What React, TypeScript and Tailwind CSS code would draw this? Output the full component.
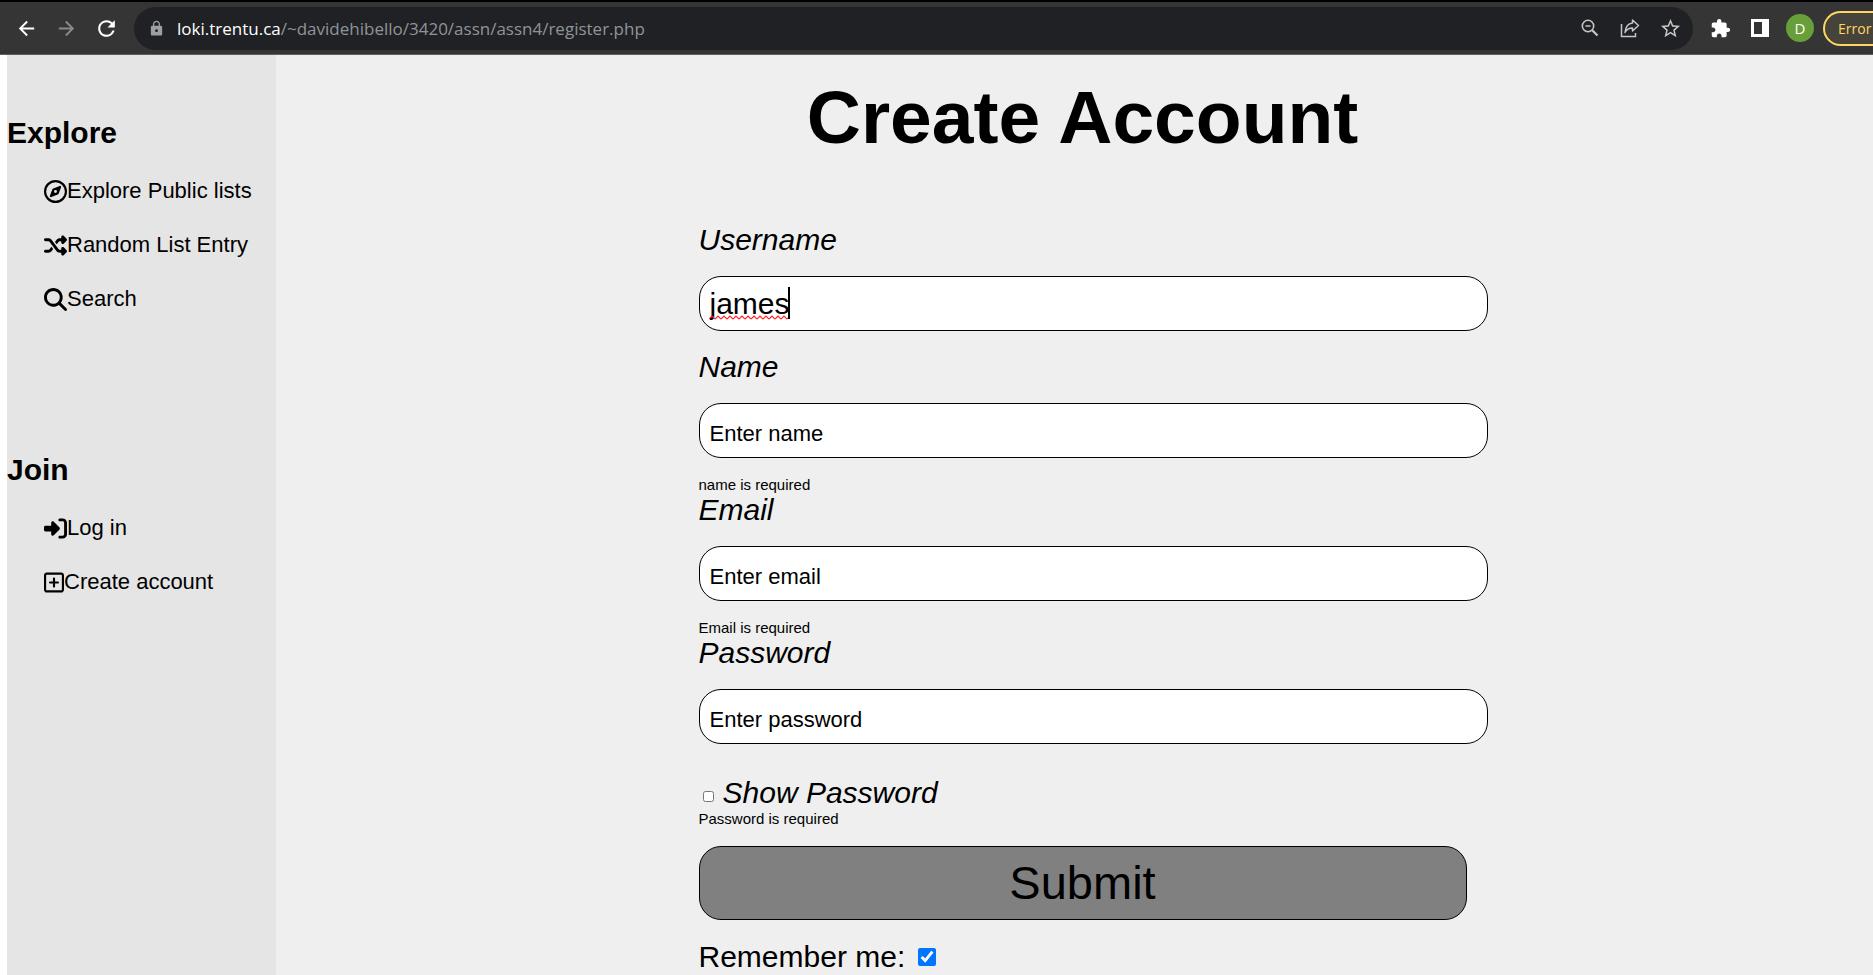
import type { ReactNode } from "react";
import { FaRegCompass, FaShuffle, FaMagnifyingGlass, FaRegSquarePlus, FaRightToBracket } from "react-icons/fa6";
import { MdArrowBack, MdArrowForward, MdRefresh, MdLock, MdStarBorder, MdExtension } from "react-icons/md";

function ZoomOutIcon() {
  return (
    <svg viewBox="0 0 18 18" className="h-[18px] w-[18px]" fill="none" stroke="currentColor" aria-hidden="true">
      <circle cx="7" cy="7" r="5.7" strokeWidth="1.6" />
      <path d="M4.500 7h5" strokeWidth="1.5" />
      <path d="M11.200 11.200l5.300 5.300" strokeWidth="2.2" />
    </svg>
  );
}

function ShareIcon() {
  return (
    <svg viewBox="0 0 20 20" className="h-5 w-5" fill="none" stroke="currentColor" strokeWidth="1.5" aria-hidden="true">
      <path d="M1.500 6v12.500h14V15" />
      <path d="M12.500 2l6 5.500-6 5.500V10C9 10 6.500 11.500 5 14.500 5.500 9 8 5.500 12.500 5z" strokeLinejoin="round" />
    </svg>
  );
}

function SidePanelIcon() {
  return (
    <svg viewBox="0 0 18 18" className="h-[18px] w-[18px]" aria-hidden="true">
      <path fill="currentColor" fillRule="evenodd" d="M0 0h18v18H0zM3 3v12h8V3z" />
    </svg>
  );
}

function ToolButton({ label, className = "", children }: { label: string; className?: string; children: ReactNode }) {
  return (
    <button type="button" aria-label={label} className={`flex h-8 w-10 shrink-0 items-center justify-center ${className}`}>
      {children}
    </button>
  );
}

function BrowserBar() {
  return (
    <header className="flex h-[55px] shrink-0 items-center overflow-hidden border-t-2 border-b border-t-black border-b-[#5f5f5f] bg-[#353535] pl-[6px] text-white">
      <ToolButton label="Back"><MdArrowBack size={23} /></ToolButton>
      <ToolButton label="Forward" className="text-[#8a8a8a]"><MdArrowForward size={23} /></ToolButton>
      <ToolButton label="Reload"><MdRefresh size={25} /></ToolButton>
      <div className="ml-2 flex h-[43px] min-w-0 grow items-center rounded-full bg-[#202124] pr-[3px] pl-[14px] font-['Open_Sans','Noto_Sans',sans-serif] text-[17px] text-[#8f9499]">
        <MdLock size={17} className="mr-3 shrink-0 text-[#9aa0a6]" />
        <p className="grow truncate pt-px">
          <span className="text-white">loki.trentu.ca</span>/~davidehibello/3420/assn/assn4/register.php
        </p>
        <ToolButton label="Zoom" className="text-[#c4c7c5]"><ZoomOutIcon /></ToolButton>
        <ToolButton label="Share" className="text-[#c4c7c5]"><ShareIcon /></ToolButton>
        <ToolButton label="Bookmark" className="text-[#c4c7c5]"><MdStarBorder size={23} /></ToolButton>
      </div>
      <ToolButton label="Extensions" className="ml-[7px]"><MdExtension size={21} /></ToolButton>
      <ToolButton label="Side panel"><SidePanelIcon /></ToolButton>
      <ToolButton label="Profile">
        <span className="flex h-7 w-7 items-center justify-center rounded-full bg-[#689f38] font-['Open_Sans',sans-serif] text-[15px]">D</span>
      </ToolButton>
      <button type="button" className="ml-[3px] h-[35px] w-[50px] shrink-0 rounded-l-full border-2 border-r-0 border-[#fdd663] bg-[#46433a] pl-[13px] text-left font-['Open_Sans',sans-serif] text-[14px] text-[#fdd663]">
        Error
      </button>
    </header>
  );
}

function NavGroup({ title, children }: { title: string; children: ReactNode }) {
  return (
    <section>
      <h2 className="text-[30px] leading-[34px] font-bold">{title}</h2>
      <ul className="mt-7 flex flex-col gap-7 pl-[37px]">{children}</ul>
    </section>
  );
}

function NavItem({ icon, children }: { icon: ReactNode; children: ReactNode }) {
  return (
    <li>
      <a href="#" className="flex items-center text-[22px] leading-[26px] whitespace-nowrap">
        {icon}
        {children}
      </a>
    </li>
  );
}

const labelClass = "block text-[30px] leading-[34px] italic";
const fieldClass =
  "mt-[19px] block h-[55px] w-full rounded-[22px] border border-black bg-white px-[10px] text-[30px] placeholder:text-[22px] placeholder:text-black outline-none";
const hintClass = "text-[15px] leading-[17px]";

export default function App() {
  return (
    <div className="flex min-h-screen flex-col bg-[#efefef] font-['Liberation_Sans',Arial,sans-serif] text-black">
      <BrowserBar />
      <div className="flex grow border-l-7 border-white">
        <nav className="flex w-[269px] shrink-0 flex-col gap-[141px] bg-[#e5e5e5] pt-[61px]">
          <NavGroup title="Explore">
            <NavItem icon={<FaRegCompass size={23} />}>Explore Public lists</NavItem>
            <NavItem icon={<FaShuffle size={23} />}>Random List Entry</NavItem>
            <NavItem icon={<FaMagnifyingGlass size={23} />}>Search</NavItem>
          </NavGroup>
          <NavGroup title="Join">
            <NavItem icon={<FaRightToBracket size={23} />}>Log in</NavItem>
            <NavItem icon={<FaRegSquarePlus className="h-[23px] w-5" />}>Create account</NavItem>
          </NavGroup>
        </nav>
        <main className="flex grow flex-col items-center pt-[19px] pl-4">
          <h1 className="text-[75px] leading-[86px] font-bold">Create Account</h1>
          <form className="mt-[63px] w-[768px]" onSubmit={(e) => e.preventDefault()}>
            <div className="w-[789px]">
              <label htmlFor="username" className={labelClass}>Username</label>
              <div className="relative">
                <input id="username" type="text" defaultValue="james" spellCheck={false} className={fieldClass} />
                <svg className="absolute top-[39px] left-[10px] h-[5px] w-[80px]" aria-hidden="true">
                  <defs>
                    <pattern id="squiggle" width="6" height="5" patternUnits="userSpaceOnUse">
                      <path d="M0 4L3 1L6 4" fill="none" stroke="#ff2020" strokeWidth="1.2" />
                    </pattern>
                  </defs>
                  <rect width="80" height="5" fill="url(#squiggle)" />
                </svg>
                <span className="absolute top-[11px] left-[89px] h-8 w-[2px] bg-black" />
              </div>
              <label htmlFor="name" className={`${labelClass} mt-[19px]`}>Name</label>
              <input id="name" type="text" placeholder="Enter name" className={fieldClass} />
              <p className={`${hintClass} mt-[18px]`}>name is required</p>
              <label htmlFor="email" className={labelClass}>Email</label>
              <input id="email" type="email" placeholder="Enter email" className={fieldClass} />
              <p className={`${hintClass} mt-[18px]`}>Email is required</p>
              <label htmlFor="password" className={labelClass}>Password</label>
              <input id="password" type="password" placeholder="Enter password" className={fieldClass} />
            </div>
            <div className="mt-8 flex items-center pl-1">
              <input id="show" type="checkbox" className="mt-[6px] mr-[9px] h-[11px] w-[11px]" />
              <label htmlFor="show" className={labelClass}>Show Password</label>
            </div>
            <p className={hintClass}>Password is required</p>
            <button type="submit" className="mt-[19px] block h-[74px] w-full rounded-[22px] border border-black bg-[#808080] text-[47px] leading-[54px]">
              Submit
            </button>
            <div className="mt-5 flex items-center text-[30px] leading-[34px]">
              <label htmlFor="remember">Remember me:</label>
              <input id="remember" type="checkbox" defaultChecked className="ml-[13px] h-[18px] w-[18px] accent-[#0075ff]" />
            </div>
          </form>
        </main>
      </div>
    </div>
  );
}
